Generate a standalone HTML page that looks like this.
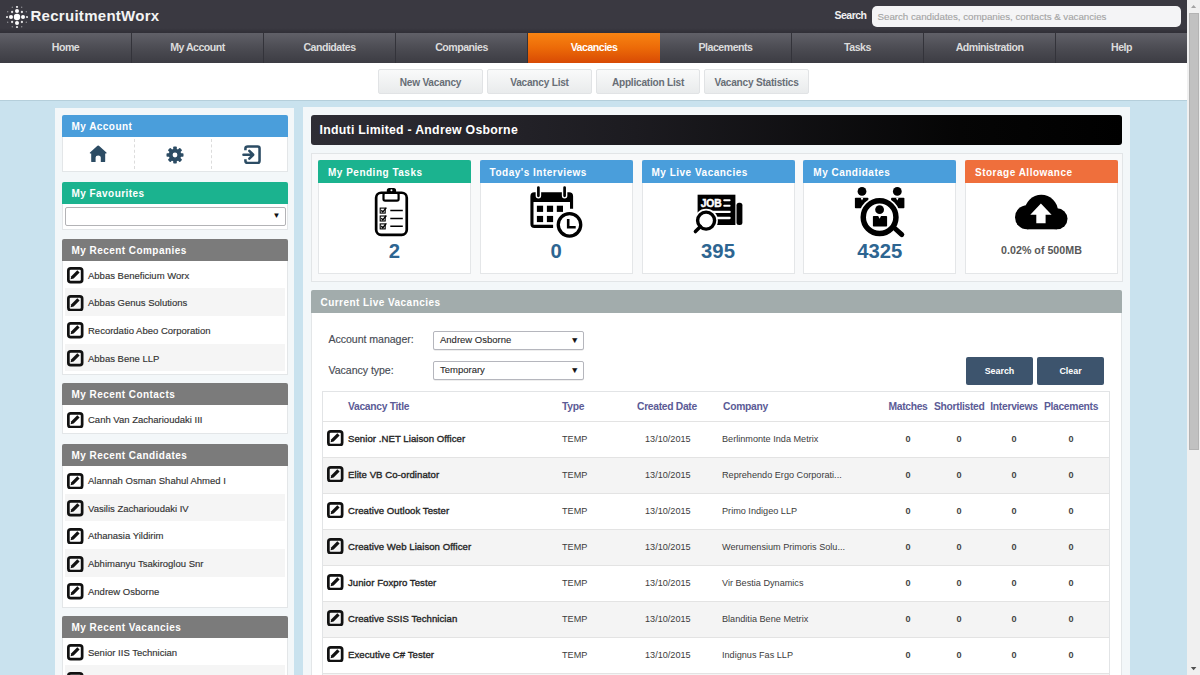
<!DOCTYPE html>
<html><head><meta charset="utf-8">
<style>
*{box-sizing:border-box;margin:0;padding:0}
html,body{width:1200px;height:675px;overflow:hidden;font-family:"Liberation Sans",sans-serif;background:#c9e2ee}
.a{position:absolute}
#top{left:0;top:0;width:1187px;height:33px;background:linear-gradient(#3a3941 85%,#302f37)}
#logo{left:5.8px;top:5.6px;width:22px;height:22px}
#brand{left:30.5px;top:7.3px;font-size:15px;font-weight:bold;color:#f4f4f4;letter-spacing:0.28px}
#slabel{left:834.5px;top:9.3px;font-size:10.5px;letter-spacing:-0.5px;font-weight:bold;color:#f0f0f0}
#sinput{left:872px;top:6px;width:309px;height:21px;background:#f4f4f6;border-radius:5px;font-size:9.8px;letter-spacing:-0.05px;color:#a3a3a3;-webkit-text-stroke:0.1px #a3a3a3;padding:4.6px 0 0 5.5px}
#nav{left:0;top:33px;width:1187px;height:30px;background:linear-gradient(#606068,#4c4c53 50%,#3c3c43)}
.ni{top:0;width:132px;height:30px;text-align:center;font-size:10.6px;letter-spacing:-0.5px;font-weight:bold;color:#dcdcdc;line-height:29px;border-right:1px solid #33333a}
.ni.act{background:linear-gradient(#f88412,#ec6a08 50%,#d84a04);color:#fff;border-right:0}
#sub{left:0;top:63px;width:1187px;height:37px;background:#fff}
.sb{top:6px;height:25px;background:linear-gradient(#f9fafa,#e9ebec);border:1px solid #e1e3e5;border-radius:2px;font-size:10.1px;letter-spacing:-0.22px;font-weight:bold;color:#686e76;text-align:center;line-height:25.2px}
#bline{left:0;top:100px;width:1187px;height:1px;background:#b5cfdb}
#sbar{left:1187px;top:0;width:13px;height:675px;background:#f0f0f0}
#thumb{left:1189px;top:13px;width:10px;height:437px;background:#c1c1c1;border:1px solid #b3b3b3}
#side{left:54.5px;top:108px;width:239.5px;height:580px;background:#f3f7f9}
#main{left:303px;top:107px;width:827px;height:580px;background:#f3f7f9}
.ph{height:22px;color:#fff;font-size:10px;letter-spacing:0.45px;font-weight:bold;padding-left:10px;line-height:24px;border-radius:2px 2px 0 0}
.pb{background:#fff;border:1px solid #e3e6e8;border-top:0}
.row{height:27.7px;position:relative;font-size:9.5px;color:#333;-webkit-text-stroke:0.15px #333;line-height:29px;padding-left:23.5px}
.row.g{background:#f5f5f5}
.sp{left:61.5px;width:226.7px}

.tile{top:160px;width:153.2px;height:113.5px;background:#fff;border:1px solid #e4e6e8;border-top:0}
.th{height:23px;margin:0 -1px;color:#fff;font-size:10px;font-weight:bold;line-height:25px;padding-left:10px;border-radius:2px 2px 0 0;letter-spacing:0.5px}
.tn{left:0;width:151px;top:80.5px;text-align:center;font-size:20.3px;font-weight:bold;color:#2d6591;line-height:20px}
.ts{left:0;width:151px;top:84px;text-align:center;font-size:10.7px;font-weight:bold;color:#585858;line-height:12px}
.lbl{font-size:10.6px;color:#484c54;-webkit-text-stroke:0.15px #484c54;line-height:12px;letter-spacing:-0.05px}
.sel{width:151px;height:18.6px;border:1px solid #b5b6bd;border-radius:2px;font-size:9.5px;color:#2a2a2a;-webkit-text-stroke:0.1px #2a2a2a;line-height:15.5px;padding-left:6px;background:#fff;box-shadow:0 0.5px 0.5px #ddd}
.sel span{position:absolute;right:4px;top:0.5px;font-size:8.5px;color:#111}
.btn{top:357px;width:67px;height:28px;background:#3d546d;border-radius:2px;color:#fff;font-size:8.9px;font-weight:bold;text-align:center;line-height:28px}

.hd{top:8.6px;font-size:10.3px;letter-spacing:-0.3px;font-weight:bold;color:#5b5b96;line-height:12px;white-space:nowrap}
.hd.c{text-align:center}
.tr{left:0;width:786px;height:36px;border-top:1px solid #e3e3e3}
.tt{left:25px;top:10.8px;font-size:9.6px;letter-spacing:0.05px;font-weight:normal;-webkit-text-stroke:0.35px #262626;color:#262626;line-height:12px;white-space:nowrap}
.td{top:11px;font-size:9.15px;color:#3c3c3c;line-height:12px;white-space:nowrap}
.tz{top:11px;width:40px;text-align:center;font-size:9.1px;font-weight:bold;color:#444;line-height:12px}
.ed{position:absolute;left:2.5px;top:6.5px;width:16.5px;height:16.5px}
</style></head><body>
<div id="top" class="a"></div>
<svg id="logo" class="a" viewBox="0 0 22 22"><circle cx="11" cy="11" r="3.2" fill="#fff" fill-opacity="1"/><circle cx="17" cy="11" r="2.0" fill="#fff" fill-opacity="1"/><circle cx="5" cy="11" r="2.0" fill="#fff" fill-opacity="1"/><circle cx="11" cy="17" r="2.0" fill="#fff" fill-opacity="1"/><circle cx="11" cy="5" r="2.0" fill="#fff" fill-opacity="1"/><circle cx="21" cy="11" r="1.1" fill="#fff" fill-opacity="0.85"/><circle cx="1" cy="11" r="1.1" fill="#fff" fill-opacity="0.85"/><circle cx="11" cy="21" r="1.1" fill="#fff" fill-opacity="0.85"/><circle cx="11" cy="1" r="1.1" fill="#fff" fill-opacity="0.85"/><circle cx="15.9" cy="16" r="1.15" fill="#fff" fill-opacity="0.85"/><circle cx="6.1" cy="16" r="1.15" fill="#fff" fill-opacity="0.85"/><circle cx="15.9" cy="6" r="1.15" fill="#fff" fill-opacity="0.85"/><circle cx="6.1" cy="6" r="1.15" fill="#fff" fill-opacity="0.85"/><circle cx="20.3" cy="16.2" r="0.7" fill="#fff" fill-opacity="0.45"/><circle cx="1.6999999999999993" cy="16.2" r="0.7" fill="#fff" fill-opacity="0.45"/><circle cx="20.3" cy="5.8" r="0.7" fill="#fff" fill-opacity="0.45"/><circle cx="1.6999999999999993" cy="5.8" r="0.7" fill="#fff" fill-opacity="0.45"/><circle cx="15.7" cy="20.8" r="0.7" fill="#fff" fill-opacity="0.45"/><circle cx="6.3" cy="20.8" r="0.7" fill="#fff" fill-opacity="0.45"/><circle cx="15.7" cy="1.1999999999999993" r="0.7" fill="#fff" fill-opacity="0.45"/><circle cx="6.3" cy="1.1999999999999993" r="0.7" fill="#fff" fill-opacity="0.45"/></svg>
<div id="brand" class="a">RecruitmentWorx</div>
<div id="slabel" class="a">Search</div>
<div id="sinput" class="a">Search candidates, companies, contacts &amp; vacancies</div>
<div id="nav" class="a">
<div class="ni a" style="left:0">Home</div>
<div class="ni a" style="left:132px">My Account</div>
<div class="ni a" style="left:264px">Candidates</div>
<div class="ni a" style="left:396px">Companies</div>
<div class="ni a act" style="left:528px">Vacancies</div>
<div class="ni a" style="left:660px">Placements</div>
<div class="ni a" style="left:792px">Tasks</div>
<div class="ni a" style="left:924px">Administration</div>
<div class="ni a" style="left:1056px;border-right:0;width:131px">Help</div>
</div>
<div id="sub" class="a">
<div class="sb a" style="left:378px;width:105px">New Vacancy</div>
<div class="sb a" style="left:487px;width:105px">Vacancy List</div>
<div class="sb a" style="left:596px;width:104px">Application List</div>
<div class="sb a" style="left:704px;width:105px">Vacancy Statistics</div>
</div>
<div id="bline" class="a"></div>
<div id="side" class="a"></div>
<div id="main" class="a"></div>
<div class="a sp" style="top:115px"><div class="ph" style="background:#4a9edb">My Account</div><div class="pb" style="height:35.3px;position:relative">
<div class="a" style="left:71.3px;top:2px;height:30px;border-left:1px dashed #dcdcdc"></div>
<div class="a" style="left:148px;top:2px;height:30px;border-left:1px dashed #dcdcdc"></div>
<svg class="a" style="left:26px;top:7.6px" width="18.4" height="17.6" viewBox="0 0 18.4 17.6"><path d="M9.2 0.6 Q9.9 0.6 10.5 1.2 L17.4 7.6 Q18 8.3 17.2 8.6 L16.2 8.6 L16.2 16.3 Q16.2 17.2 15.3 17.2 L11.8 17.2 L11.8 12.6 Q11.8 10.6 9.2 10.6 Q6.6 10.6 6.6 12.6 L6.6 17.2 L3.1 17.2 Q2.2 17.2 2.2 16.3 L2.2 8.6 L1.2 8.6 Q0.4 8.3 1 7.6 L7.9 1.2 Q8.5 0.6 9.2 0.6 Z" fill="#2c4c64"/></svg>
<svg class="a" style="left:103.2px;top:8.6px" width="18" height="18" viewBox="0 0 18 18"><g fill="#2c4c64"><circle cx="9" cy="9" r="6.3"/><g transform="rotate(0 9 9)"><rect x="7.2" y="0.5" width="3.6" height="4" rx="0.8"/><rect x="7.2" y="13.5" width="3.6" height="4" rx="0.8"/></g><g transform="rotate(45 9 9)"><rect x="7.2" y="0.5" width="3.6" height="4" rx="0.8"/><rect x="7.2" y="13.5" width="3.6" height="4" rx="0.8"/></g><g transform="rotate(90 9 9)"><rect x="7.2" y="0.5" width="3.6" height="4" rx="0.8"/><rect x="7.2" y="13.5" width="3.6" height="4" rx="0.8"/></g><g transform="rotate(135 9 9)"><rect x="7.2" y="0.5" width="3.6" height="4" rx="0.8"/><rect x="7.2" y="13.5" width="3.6" height="4" rx="0.8"/></g></g><circle cx="9" cy="9" r="2.4" fill="#fff"/></svg>
<svg class="a" style="left:179px;top:7.8px" width="19.5" height="19.5" viewBox="0 0 20 20"><path d="M6 1.5 L16 1.5 Q18 1.5 18 3.5 L18 16.5 Q18 18.5 16 18.5 L6 18.5 Q3.5 18.5 3.5 16.5 L3.5 14.5 M3.5 5.5 L3.5 3.5 Q3.5 1.5 6 1.5" fill="none" stroke="#2c4c64" stroke-width="2.6"/><path d="M1.5 10 L11 10 M7.5 6 L11.5 10 L7.5 14" fill="none" stroke="#2c4c64" stroke-width="2.6" stroke-linecap="round" stroke-linejoin="round"/></svg>
</div></div>
<div class="a sp" style="top:181.5px"><div class="ph" style="background:#1bb38f">My Favourites</div><div class="pb" style="height:26px;position:relative">
<div class="a" style="left:2px;top:3.5px;width:221px;height:18.5px;border:1px solid #b3b3b6;border-radius:2px;background:#fff"><span class="a" style="right:4px;top:3px;font-size:8px;color:#111">&#9660;</span></div>
</div></div>
<div class="a sp" style="top:238.5px"><div class="ph" style="background:#7b7b7b">My Recent Companies</div><div class="pb" style="padding:0 2px 2.5px 2px"><div class="row"><svg class="ed" viewBox="0 0 16.5 16.5"><rect x="1.35" y="1.35" width="13.8" height="13.8" rx="2.4" fill="none" stroke="#111" stroke-width="2.7"/><path d="M3.6 12.3 L4.3 9.3 L10.3 3.3 L12.6 5.6 L6.6 11.6 Z" fill="#111"/></svg>Abbas Beneficium Worx</div><div class="row g"><svg class="ed" viewBox="0 0 16.5 16.5"><rect x="1.35" y="1.35" width="13.8" height="13.8" rx="2.4" fill="none" stroke="#111" stroke-width="2.7"/><path d="M3.6 12.3 L4.3 9.3 L10.3 3.3 L12.6 5.6 L6.6 11.6 Z" fill="#111"/></svg>Abbas Genus Solutions</div><div class="row"><svg class="ed" viewBox="0 0 16.5 16.5"><rect x="1.35" y="1.35" width="13.8" height="13.8" rx="2.4" fill="none" stroke="#111" stroke-width="2.7"/><path d="M3.6 12.3 L4.3 9.3 L10.3 3.3 L12.6 5.6 L6.6 11.6 Z" fill="#111"/></svg>Recordatio Abeo Corporation</div><div class="row g"><svg class="ed" viewBox="0 0 16.5 16.5"><rect x="1.35" y="1.35" width="13.8" height="13.8" rx="2.4" fill="none" stroke="#111" stroke-width="2.7"/><path d="M3.6 12.3 L4.3 9.3 L10.3 3.3 L12.6 5.6 L6.6 11.6 Z" fill="#111"/></svg>Abbas Bene LLP</div></div></div>
<div class="a sp" style="top:383px"><div class="ph" style="background:#7b7b7b">My Recent Contacts</div><div class="pb" style="padding:0 2px 0.5px 2px"><div class="row"><svg class="ed" viewBox="0 0 16.5 16.5"><rect x="1.35" y="1.35" width="13.8" height="13.8" rx="2.4" fill="none" stroke="#111" stroke-width="2.7"/><path d="M3.6 12.3 L4.3 9.3 L10.3 3.3 L12.6 5.6 L6.6 11.6 Z" fill="#111"/></svg>Canh Van Zacharioudaki III</div></div></div>
<div class="a sp" style="top:444px"><div class="ph" style="background:#7b7b7b">My Recent Candidates</div><div class="pb" style="padding:0 2px 2.5px 2px"><div class="row"><svg class="ed" viewBox="0 0 16.5 16.5"><rect x="1.35" y="1.35" width="13.8" height="13.8" rx="2.4" fill="none" stroke="#111" stroke-width="2.7"/><path d="M3.6 12.3 L4.3 9.3 L10.3 3.3 L12.6 5.6 L6.6 11.6 Z" fill="#111"/></svg>Alannah Osman Shahul Ahmed I</div><div class="row g"><svg class="ed" viewBox="0 0 16.5 16.5"><rect x="1.35" y="1.35" width="13.8" height="13.8" rx="2.4" fill="none" stroke="#111" stroke-width="2.7"/><path d="M3.6 12.3 L4.3 9.3 L10.3 3.3 L12.6 5.6 L6.6 11.6 Z" fill="#111"/></svg>Vasilis Zacharioudaki IV</div><div class="row"><svg class="ed" viewBox="0 0 16.5 16.5"><rect x="1.35" y="1.35" width="13.8" height="13.8" rx="2.4" fill="none" stroke="#111" stroke-width="2.7"/><path d="M3.6 12.3 L4.3 9.3 L10.3 3.3 L12.6 5.6 L6.6 11.6 Z" fill="#111"/></svg>Athanasia Yildirim</div><div class="row g"><svg class="ed" viewBox="0 0 16.5 16.5"><rect x="1.35" y="1.35" width="13.8" height="13.8" rx="2.4" fill="none" stroke="#111" stroke-width="2.7"/><path d="M3.6 12.3 L4.3 9.3 L10.3 3.3 L12.6 5.6 L6.6 11.6 Z" fill="#111"/></svg>Abhimanyu Tsakiroglou Snr</div><div class="row"><svg class="ed" viewBox="0 0 16.5 16.5"><rect x="1.35" y="1.35" width="13.8" height="13.8" rx="2.4" fill="none" stroke="#111" stroke-width="2.7"/><path d="M3.6 12.3 L4.3 9.3 L10.3 3.3 L12.6 5.6 L6.6 11.6 Z" fill="#111"/></svg>Andrew Osborne</div></div></div>
<div class="a sp" style="top:615.8px"><div class="ph" style="background:#7b7b7b">My Recent Vacancies</div><div class="pb" style="padding:0 2px 2.5px 2px"><div class="row"><svg class="ed" viewBox="0 0 16.5 16.5"><rect x="1.35" y="1.35" width="13.8" height="13.8" rx="2.4" fill="none" stroke="#111" stroke-width="2.7"/><path d="M3.6 12.3 L4.3 9.3 L10.3 3.3 L12.6 5.6 L6.6 11.6 Z" fill="#111"/></svg>Senior IIS Technician</div><div class="row g"><svg class="ed" viewBox="0 0 16.5 16.5"><rect x="1.35" y="1.35" width="13.8" height="13.8" rx="2.4" fill="none" stroke="#111" stroke-width="2.7"/><path d="M3.6 12.3 L4.3 9.3 L10.3 3.3 L12.6 5.6 L6.6 11.6 Z" fill="#111"/></svg>Senior IIS Technician</div></div></div>


<div class="a" id="mh" style="left:311px;top:115px;width:811px;height:30px;background:linear-gradient(90deg,#2e2d35 0%,#1c1b20 40%,#050505 80%,#000 100%);border-radius:3px;color:#fff;font-size:12.3px;letter-spacing:0.27px;font-weight:bold;line-height:30px;padding-left:8.5px">Induti Limited - Andrew Osborne</div>
<div class="a" id="stats" style="left:311px;top:153px;width:812px;height:128.6px;background:#f8f9fa;border:1px solid #e2e5e7"></div>
<div class="a tile" style="left:318px"><div class="th" style="background:#1bb38f">My Pending Tasks</div><div class="a tn">2</div></div>
<div class="a tile" style="left:479.6px"><div class="th" style="background:#4a9edb">Today's Interviews</div><div class="a tn">0</div></div>
<div class="a tile" style="left:641.5px"><div class="th" style="background:#4a9edb">My Live Vacancies</div><div class="a tn">395</div></div>
<div class="a tile" style="left:803.3px"><div class="th" style="background:#4a9edb">My Candidates</div><div class="a tn">4325</div></div>
<div class="a tile" style="left:965px"><div class="th" style="background:#ef6f3c">Storage Allowance</div><div class="a ts">0.02% of 500MB</div></div>

<div class="a" style="left:311px;top:290px;width:811px;height:23px;background:#a2acac;border-radius:2px 2px 0 0;color:#fff;font-size:10px;letter-spacing:0.45px;font-weight:bold;line-height:25.4px;padding-left:9.5px">Current Live Vacancies</div>
<div class="a" style="left:311px;top:313px;width:811px;height:370px;background:#fff;border:1px solid #e3e6e8;border-top:0"></div>
<div class="a lbl" style="left:328.5px;top:333.3px">Account manager:</div>
<div class="a lbl" style="left:328.5px;top:364.3px">Vacancy type:</div>
<div class="a sel" style="left:433px;top:331px">Andrew Osborne<span>&#9660;</span></div>
<div class="a sel" style="left:433px;top:361.3px">Temporary<span>&#9660;</span></div>
<div class="a btn" style="left:966px">Search</div>
<div class="a btn" style="left:1037px">Clear</div>
<div class="a" id="tb" style="left:322px;top:391px;width:788px;height:300px;border:1px solid #e2e4e6;background:#fff;overflow:hidden"><div class="a hd" style="left:25px">Vacancy Title</div><div class="a hd" style="left:239px">Type</div><div class="a hd" style="left:314px">Created Date</div><div class="a hd" style="left:400px">Company</div><div class="a hd c" style="left:565px;width:40px">Matches</div><div class="a hd c" style="left:611px;width:50px">Shortlisted</div><div class="a hd c" style="left:666px;width:50px">Interviews</div><div class="a hd c" style="left:720px;width:56px">Placements</div><div class="a tr" style="top:29px;"><svg class="a" style="left:4px;top:7.6px" width="16.5" height="16.5" viewBox="0 0 16.5 16.5"><rect x="1.35" y="1.35" width="13.8" height="13.8" rx="2.4" fill="none" stroke="#111" stroke-width="2.7"/><path d="M3.6 12.3 L4.3 9.3 L10.3 3.3 L12.6 5.6 L6.6 11.6 Z" fill="#111"/></svg><div class="a tt">Senior .NET Liaison Officer</div><div class="a td" style="left:239px">TEMP</div><div class="a td" style="left:322px">13/10/2015</div><div class="a td" style="left:399px">Berlinmonte Inda Metrix</div><div class="a tz" style="left:565px">0</div><div class="a tz" style="left:616px">0</div><div class="a tz" style="left:671px">0</div><div class="a tz" style="left:728px">0</div></div><div class="a tr" style="top:65px;background:#f4f4f4;"><svg class="a" style="left:4px;top:7.6px" width="16.5" height="16.5" viewBox="0 0 16.5 16.5"><rect x="1.35" y="1.35" width="13.8" height="13.8" rx="2.4" fill="none" stroke="#111" stroke-width="2.7"/><path d="M3.6 12.3 L4.3 9.3 L10.3 3.3 L12.6 5.6 L6.6 11.6 Z" fill="#111"/></svg><div class="a tt">Elite VB Co-ordinator</div><div class="a td" style="left:239px">TEMP</div><div class="a td" style="left:322px">13/10/2015</div><div class="a td" style="left:399px">Reprehendo Ergo Corporati...</div><div class="a tz" style="left:565px">0</div><div class="a tz" style="left:616px">0</div><div class="a tz" style="left:671px">0</div><div class="a tz" style="left:728px">0</div></div><div class="a tr" style="top:101px;"><svg class="a" style="left:4px;top:7.6px" width="16.5" height="16.5" viewBox="0 0 16.5 16.5"><rect x="1.35" y="1.35" width="13.8" height="13.8" rx="2.4" fill="none" stroke="#111" stroke-width="2.7"/><path d="M3.6 12.3 L4.3 9.3 L10.3 3.3 L12.6 5.6 L6.6 11.6 Z" fill="#111"/></svg><div class="a tt">Creative Outlook Tester</div><div class="a td" style="left:239px">TEMP</div><div class="a td" style="left:322px">13/10/2015</div><div class="a td" style="left:399px">Primo Indigeo LLP</div><div class="a tz" style="left:565px">0</div><div class="a tz" style="left:616px">0</div><div class="a tz" style="left:671px">0</div><div class="a tz" style="left:728px">0</div></div><div class="a tr" style="top:137px;background:#f4f4f4;"><svg class="a" style="left:4px;top:7.6px" width="16.5" height="16.5" viewBox="0 0 16.5 16.5"><rect x="1.35" y="1.35" width="13.8" height="13.8" rx="2.4" fill="none" stroke="#111" stroke-width="2.7"/><path d="M3.6 12.3 L4.3 9.3 L10.3 3.3 L12.6 5.6 L6.6 11.6 Z" fill="#111"/></svg><div class="a tt">Creative Web Liaison Officer</div><div class="a td" style="left:239px">TEMP</div><div class="a td" style="left:322px">13/10/2015</div><div class="a td" style="left:399px">Werumensium Primoris Solu...</div><div class="a tz" style="left:565px">0</div><div class="a tz" style="left:616px">0</div><div class="a tz" style="left:671px">0</div><div class="a tz" style="left:728px">0</div></div><div class="a tr" style="top:173px;"><svg class="a" style="left:4px;top:7.6px" width="16.5" height="16.5" viewBox="0 0 16.5 16.5"><rect x="1.35" y="1.35" width="13.8" height="13.8" rx="2.4" fill="none" stroke="#111" stroke-width="2.7"/><path d="M3.6 12.3 L4.3 9.3 L10.3 3.3 L12.6 5.6 L6.6 11.6 Z" fill="#111"/></svg><div class="a tt">Junior Foxpro Tester</div><div class="a td" style="left:239px">TEMP</div><div class="a td" style="left:322px">13/10/2015</div><div class="a td" style="left:399px">Vir Bestia Dynamics</div><div class="a tz" style="left:565px">0</div><div class="a tz" style="left:616px">0</div><div class="a tz" style="left:671px">0</div><div class="a tz" style="left:728px">0</div></div><div class="a tr" style="top:209px;background:#f4f4f4;"><svg class="a" style="left:4px;top:7.6px" width="16.5" height="16.5" viewBox="0 0 16.5 16.5"><rect x="1.35" y="1.35" width="13.8" height="13.8" rx="2.4" fill="none" stroke="#111" stroke-width="2.7"/><path d="M3.6 12.3 L4.3 9.3 L10.3 3.3 L12.6 5.6 L6.6 11.6 Z" fill="#111"/></svg><div class="a tt">Creative SSIS Technician</div><div class="a td" style="left:239px">TEMP</div><div class="a td" style="left:322px">13/10/2015</div><div class="a td" style="left:399px">Blanditia Bene Metrix</div><div class="a tz" style="left:565px">0</div><div class="a tz" style="left:616px">0</div><div class="a tz" style="left:671px">0</div><div class="a tz" style="left:728px">0</div></div><div class="a tr" style="top:245px;"><svg class="a" style="left:4px;top:7.6px" width="16.5" height="16.5" viewBox="0 0 16.5 16.5"><rect x="1.35" y="1.35" width="13.8" height="13.8" rx="2.4" fill="none" stroke="#111" stroke-width="2.7"/><path d="M3.6 12.3 L4.3 9.3 L10.3 3.3 L12.6 5.6 L6.6 11.6 Z" fill="#111"/></svg><div class="a tt">Executive C# Tester</div><div class="a td" style="left:239px">TEMP</div><div class="a td" style="left:322px">13/10/2015</div><div class="a td" style="left:399px">Indignus Fas LLP</div><div class="a tz" style="left:565px">0</div><div class="a tz" style="left:616px">0</div><div class="a tz" style="left:671px">0</div><div class="a tz" style="left:728px">0</div></div><div class="a tr" style="top:281px;background:#f4f4f4;"><svg class="a" style="left:4px;top:7.6px" width="16.5" height="16.5" viewBox="0 0 16.5 16.5"><rect x="1.35" y="1.35" width="13.8" height="13.8" rx="2.4" fill="none" stroke="#111" stroke-width="2.7"/><path d="M3.6 12.3 L4.3 9.3 L10.3 3.3 L12.6 5.6 L6.6 11.6 Z" fill="#111"/></svg><div class="a tt">Senior IIS Technician</div><div class="a td" style="left:239px">TEMP</div><div class="a td" style="left:322px">13/10/2015</div><div class="a td" style="left:399px">Abbas Bene LLP</div><div class="a tz" style="left:565px">0</div><div class="a tz" style="left:616px">0</div><div class="a tz" style="left:671px">0</div><div class="a tz" style="left:728px">0</div></div></div>
<svg class="a" style="left:0;top:0;pointer-events:none" width="1200" height="675" viewBox="0 0 1200 675">
<g id="clip">
<rect x="376.15" y="192.75" width="30.6" height="42.1" rx="5" fill="#fff" stroke="#000" stroke-width="2.7"/>
<rect x="386.8" y="187.9" width="9.3" height="6" rx="2.5" fill="#000"/>
<circle cx="391.45" cy="190.2" r="1" fill="#fff"/>
<rect x="383.5" y="193" width="15.1" height="7.6" rx="1.6" fill="#fff" stroke="#000" stroke-width="2.2"/>
<g fill="none" stroke="#000">
<rect x="380.2" y="208.1" width="5" height="5" stroke-width="1.1"/>
<rect x="380.2" y="216.0" width="5" height="5" stroke-width="1.1"/>
<rect x="380.2" y="223.9" width="5" height="5" stroke-width="1.1"/>
<path d="M381.3 210.2 L382.8 212 L386.4 207.6 M381.3 218.1 L382.8 219.9 L386.4 215.5 M381.3 226 L382.8 227.8 L386.4 223.4" stroke-width="1.4"/>
<path d="M390.3 210.6 H402.8 M390.3 218.4 H402.8 M390.3 226.2 H402.8" stroke-width="1.5"/>
</g>
</g>
<g id="cal">
<path d="M530.4 196.3 Q530.4 192.3 534.4 192.3 L569.1 192.3 Q573.1 192.3 573.1 196.3 L573.1 208.8 L570 208.8 L570 202.1 L533.5 202.1 L533.5 224.8 L553.1 224.8 L553.1 227.9 L534.4 227.9 Q530.4 227.9 530.4 223.9 Z" fill="#000"/>
<g stroke="#fff" stroke-width="5.5" stroke-linecap="round"><path d="M538.4 187.5 V195.8 M564.6 187.5 V195.8"/></g>
<g stroke="#000" stroke-width="2.7" stroke-linecap="round"><path d="M538.4 187.5 V195.8 M564.6 187.5 V195.8"/></g>
<g fill="#000"><rect x="536.9" y="205.7" width="6.2" height="6.2"/><rect x="546.9" y="205.7" width="6.2" height="6.2"/><rect x="556.8" y="205.7" width="6.2" height="6.2"/><rect x="536.9" y="215.9" width="6.2" height="6.2"/><rect x="546.9" y="215.9" width="6.2" height="6.2"/></g>
<circle cx="569.5" cy="224.8" r="13.5" fill="#fff"/>
<circle cx="569.5" cy="224.8" r="11.25" fill="#fff" stroke="#000" stroke-width="3.3"/>
<path d="M568.2 219 V227.2 H575.7" fill="none" stroke="#000" stroke-width="2.6" stroke-linejoin="miter"/>
</g>
<g id="job">
<rect x="697.6" y="194.7" width="37.8" height="30.3" fill="#000"/>
<rect x="736.5" y="202.8" width="5.9" height="22.2" rx="2.5" fill="#000"/>
<text x="700.8" y="206.6" font-family="Liberation Sans" font-weight="bold" font-size="10.3" fill="#fff" stroke="#fff" stroke-width="0.45" letter-spacing="-0.2">JOB</text>
<g stroke="#fff" stroke-width="2" stroke-linecap="round"><path d="M724.2 200.2 H729.6 M724.2 205.8 H729.6"/></g>
<g stroke="#fff" stroke-width="2.3" stroke-linecap="round"><path d="M712 211.9 H729.6 M714 218 H729.6"/></g>
<circle cx="706.1" cy="220.6" r="11.8" fill="#fff"/>
<circle cx="706.1" cy="220.6" r="8.5" fill="#fff" stroke="#000" stroke-width="3.4"/>
<path d="M700.5 226.4 L695.4 231.6" stroke="#000" stroke-width="3.5" stroke-linecap="round"/>
</g>
<g id="cand">
<g fill="#000">
<circle cx="862" cy="191.4" r="4.4"/><rect x="854.9" y="197.7" width="13.5" height="10.6" rx="0.8"/>
<circle cx="897.3" cy="191.4" r="4.4"/><rect x="891.1" y="197.7" width="13.3" height="10.6" rx="0.8"/>
</g>
<path d="M860.6 197.7 L862 200.5 L863.4 197.7 Z M895.9 197.7 L897.3 200.5 L898.7 197.7 Z" fill="#fff"/>
<circle cx="879.6" cy="217.2" r="20.8" fill="#fff"/>
<path d="M895.5 229 L901.8 234.6" stroke="#000" stroke-width="5" stroke-linecap="round"/>
<circle cx="879.6" cy="217.2" r="16.35" fill="#fff" stroke="#000" stroke-width="5.5"/>
<circle cx="879.6" cy="209.7" r="4.4" fill="#000"/>
<rect x="872.9" y="215.9" width="14.2" height="10.7" rx="0.8" fill="#000"/>
<path d="M878.2 215.9 L879.6 218.8 L881 215.9 Z" fill="#fff"/>
</g>
<g id="cloud" fill="#000">
<circle cx="1027" cy="217.3" r="12"/>
<circle cx="1041.3" cy="211.5" r="16.7"/>
<circle cx="1057" cy="218.8" r="10.5"/>
<rect x="1027" y="214" width="30" height="15.3"/>
<path d="M1040.9 203.6 L1051.6 214.7 L1045.6 214.7 L1045.6 223.2 L1036.3 223.2 L1036.3 214.7 L1030.3 214.7 Z" fill="#fff"/>
</g>
</svg>
<div id="sbar" class="a"></div>
<div id="thumb" class="a"></div><svg class="a" style="left:1187px;top:0" width="13" height="675" viewBox="0 0 13 675"><path d="M4 8 L6.6 5 L9.2 8 Z" fill="#a3a3a3"/><path d="M3.8 667 L9.4 667 L6.6 670.2 Z" fill="#505050"/></svg>
</body></html>
